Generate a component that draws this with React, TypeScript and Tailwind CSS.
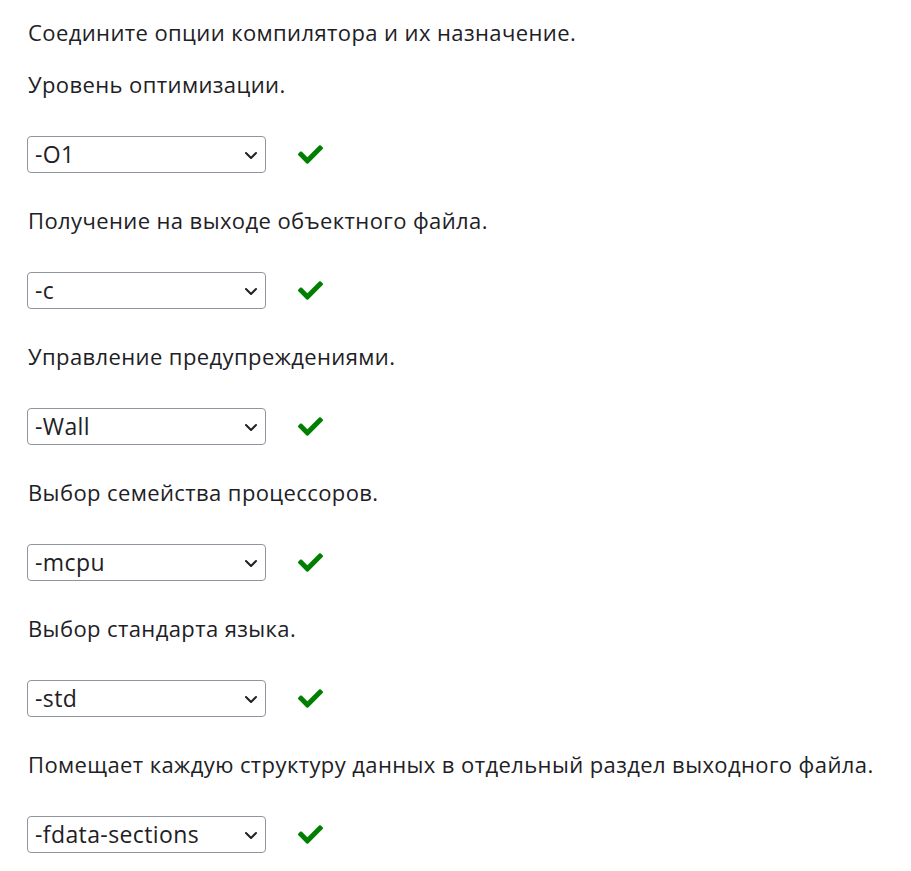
import React from 'react';
import { FaCheck } from 'react-icons/fa';

const rows = [
  { label: 'Уровень оптимизации.', value: '-O1' },
  { label: 'Получение на выходе объектного файла.', value: '-c' },
  { label: 'Управление предупреждениями.', value: '-Wall' },
  { label: 'Выбор семейства процессоров.', value: '-mcpu' },
  { label: 'Выбор стандарта языка.', value: '-std' },
  { label: 'Помещает каждую структуру данных в отдельный раздел выходного файла.', value: '-fdata-sections' },
];

const Chevron = () => (
  <svg
    className="pointer-events-none absolute right-[8px] top-1/2 -translate-y-1/2"
    width="14"
    height="10"
    viewBox="0 0 14 10"
    fill="none"
  >
    <polyline points="2,3 7,8 12,3" stroke="#1d2125" strokeWidth="2" strokeLinecap="round" strokeLinejoin="round" />
  </svg>
);

const App: React.FC = () => {
  return (
    <div
      className="min-h-screen bg-white px-[27px] pt-[16px] text-[22px] leading-[33px] tracking-[0.4px] text-[#1d2125]"
      style={{ fontFamily: '"Open Sans", "Noto Sans", sans-serif' }}
    >
      <p className="mb-[19px] pl-[1px]">Соедините опции компилятора и их назначение.</p>
      <div className="flex flex-col gap-[31px]">
        {rows.map((row) => (
          <div key={row.value} className="flex flex-col gap-[35px]">
            <p className="pl-[1px]">{row.label}</p>
            <div className="flex items-center gap-[32px]">
              <div className="relative w-[239px]">
                <select
                  defaultValue={row.value}
                  className="h-[37px] w-full appearance-none rounded-[4px] border border-[#8f959e] bg-white pl-[7px] pr-[30px] text-[23px] leading-[35px] tracking-[0.4px] text-[#1d2125] outline-none"
                  style={{ fontFamily: '"Open Sans", "Noto Sans", sans-serif' }}
                >
                  <option value={row.value}>{row.value}</option>
                </select>
                <Chevron />
              </div>
              <FaCheck className="text-[#008000]" size={25} />
            </div>
          </div>
        ))}
      </div>
    </div>
  );
};

export default App;
